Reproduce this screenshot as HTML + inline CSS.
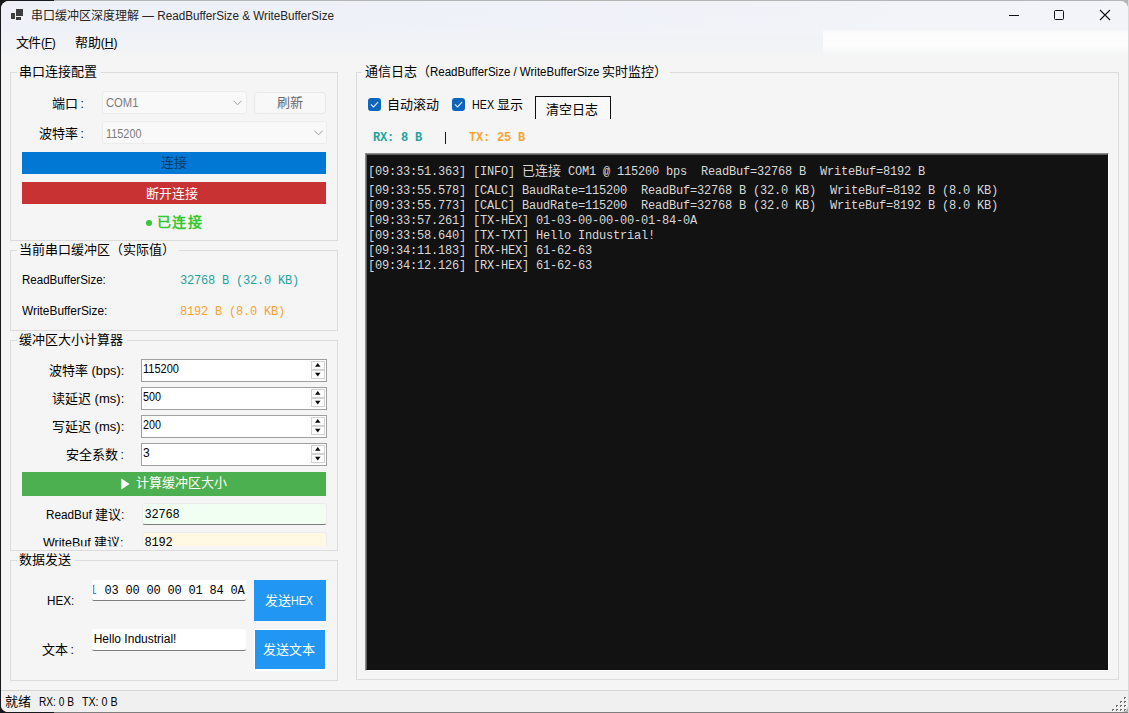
<!DOCTYPE html>
<html lang="zh-CN"><head><meta charset="utf-8"><title>Serial Buffer</title>
<style>
*{box-sizing:border-box;margin:0;padding:0}
html,body{width:1129px;height:713px;overflow:hidden}
body{font-family:"Liberation Sans",sans-serif;font-size:13px;color:#000;position:relative;background:#b4b5b7}
.t{position:absolute;white-space:pre}
.l{font-family:"Liberation Sans",sans-serif}
svg{position:absolute;overflow:visible}
</style></head><body>
<div style="position:absolute;left:0px;top:0px;width:1px;height:713px;background:#17181c"></div>
<div style="position:absolute;left:0px;top:0px;width:54px;height:1px;background:#17181c"></div>
<div style="position:absolute;left:0px;top:712px;width:1129px;height:1px;background:#7e7e7e"></div>
<div style="position:absolute;left:0px;top:712px;width:54px;height:1px;background:#17181c"></div>
<div style="position:absolute;left:0px;top:0px;width:9px;height:9px;background:#17181c"></div>
<div style="position:absolute;left:0px;top:704px;width:9px;height:9px;background:#17181c"></div>
<div style="position:absolute;left:1128px;top:0px;width:1px;height:713px;background:#d9d9d9"></div>
<div style="position:absolute;left:1px;top:1px;width:1127px;height:711px;background:#f5f5f5;border-radius:8px 8px 7px 7px;overflow:hidden"><div style="position:absolute;left:0;top:0;width:1127px;height:60px;background:linear-gradient(180deg,#eef0f8 0px,#eef1f8 26px,#f0f2f7 34px,#f2f3f6 46px,#f5f5f5 58px)"></div><div style="position:absolute;left:0;top:0;width:1127px;height:34px;background:linear-gradient(90deg,rgba(248,250,250,0) 25%,rgba(248,250,250,0.4) 100%)"></div><div style="position:absolute;left:822px;top:29px;width:305px;height:26px;background:linear-gradient(180deg,rgba(252,252,253,0.3) 0px,#fcfcfd 3px,#fdfdfd 16px,rgba(250,250,250,0.5) 22px,rgba(245,245,245,0) 26px)"></div></div>
<div style="position:absolute;left:16px;top:9px;width:7px;height:7px;background:#3d3d3d"></div>
<div style="position:absolute;left:11px;top:13px;width:4px;height:6px;background:#3d3d3d"></div>
<div style="position:absolute;left:16px;top:17px;width:5px;height:3px;background:#3d3d3d"></div>
<svg style="left:1000px;top:0" width="129" height="30" viewBox="0 0 129 30" fill="none" stroke="#111" stroke-width="1"><path d="M9 15.5H19"/><rect x="54.5" y="10.5" width="9" height="9" rx="1"/><path d="M100 10L110 20M110 10L100 20" stroke-width="1.1"/></svg>
<div style="position:absolute;left:10px;top:72px;width:328px;height:169px;border:1px solid #dcdcdc"></div>
<div style="position:absolute;left:16.5px;top:70px;width:84.0px;height:5px;background:#f5f5f5"></div>
<div style="position:absolute;left:10px;top:250px;width:328px;height:81px;border:1px solid #dcdcdc"></div>
<div style="position:absolute;left:16.5px;top:248px;width:162.0px;height:5px;background:#f5f5f5"></div>
<div style="position:absolute;left:10px;top:340px;width:328px;height:211px;border:1px solid #dcdcdc"></div>
<div style="position:absolute;left:16.5px;top:338px;width:110.0px;height:5px;background:#f5f5f5"></div>
<div style="position:absolute;left:10px;top:560px;width:328px;height:121px;border:1px solid #dcdcdc"></div>
<div style="position:absolute;left:16.5px;top:558px;width:58.0px;height:5px;background:#f5f5f5"></div>
<div style="position:absolute;left:356px;top:72px;width:763px;height:608px;border:1px solid #dcdcdc"></div>
<div style="position:absolute;left:362px;top:70px;width:308px;height:5px;background:#f5f5f5"></div>
<div style="position:absolute;left:102px;top:91px;width:145px;height:23px;background:#f9f9f9;border:1px solid #ececec;border-radius:3px"></div>
<svg style="left:233.4px;top:100.2px" width="9" height="6" viewBox="0 0 9 6" fill="none" stroke="#a0a0a0" stroke-width="1"><path d="M0.5 0.8L4.5 4.8L8.5 0.8"/></svg>
<div style="position:absolute;left:254px;top:92px;width:72px;height:22px;background:#f8f8f8;border:1px solid #e9e9e9;border-radius:4px"></div>
<div style="position:absolute;left:102px;top:121px;width:225px;height:23px;background:#f9f9f9;border:1px solid #ececec;border-radius:3px"></div>
<svg style="left:313.6px;top:130.2px" width="9" height="6" viewBox="0 0 9 6" fill="none" stroke="#a0a0a0" stroke-width="1"><path d="M0.5 0.8L4.5 4.8L8.5 0.8"/></svg>
<div style="position:absolute;left:22px;top:152px;width:304px;height:22px;background:#0078d4"></div>
<div style="position:absolute;left:22px;top:182px;width:304px;height:22px;background:#c83232"></div>
<div style="position:absolute;left:146px;top:219.7px;width:6.2px;height:6.6px;background:#35c935;border-radius:50%"></div>
<div style="position:absolute;left:141px;top:359px;width:186px;height:23px;background:#fff;border:1px solid #9f9f9f"></div>
<div style="position:absolute;left:311px;top:361px;width:13.5px;height:8.6px;background:#fefefe;border:1px solid #d2d2d2"></div>
<div style="position:absolute;left:311px;top:370.2px;width:13.5px;height:8.6px;background:#fefefe;border:1px solid #d2d2d2"></div>
<svg style="left:314.8px;top:363.2px" width="5.5" height="14" viewBox="0 0 5.5 14" fill="#0c0c0c"><path d="M0 3.8L2.75 0L5.5 3.8Z"/><path d="M0 9.7L5.5 9.7L2.75 13.4Z"/></svg>
<div style="position:absolute;left:141px;top:387px;width:186px;height:23px;background:#fff;border:1px solid #9f9f9f"></div>
<div style="position:absolute;left:311px;top:389px;width:13.5px;height:8.6px;background:#fefefe;border:1px solid #d2d2d2"></div>
<div style="position:absolute;left:311px;top:398.2px;width:13.5px;height:8.6px;background:#fefefe;border:1px solid #d2d2d2"></div>
<svg style="left:314.8px;top:391.2px" width="5.5" height="14" viewBox="0 0 5.5 14" fill="#0c0c0c"><path d="M0 3.8L2.75 0L5.5 3.8Z"/><path d="M0 9.7L5.5 9.7L2.75 13.4Z"/></svg>
<div style="position:absolute;left:141px;top:415px;width:186px;height:23px;background:#fff;border:1px solid #9f9f9f"></div>
<div style="position:absolute;left:311px;top:417px;width:13.5px;height:8.6px;background:#fefefe;border:1px solid #d2d2d2"></div>
<div style="position:absolute;left:311px;top:426.2px;width:13.5px;height:8.6px;background:#fefefe;border:1px solid #d2d2d2"></div>
<svg style="left:314.8px;top:419.2px" width="5.5" height="14" viewBox="0 0 5.5 14" fill="#0c0c0c"><path d="M0 3.8L2.75 0L5.5 3.8Z"/><path d="M0 9.7L5.5 9.7L2.75 13.4Z"/></svg>
<div style="position:absolute;left:141px;top:443px;width:186px;height:23px;background:#fff;border:1px solid #9f9f9f"></div>
<div style="position:absolute;left:311px;top:445px;width:13.5px;height:8.6px;background:#fefefe;border:1px solid #d2d2d2"></div>
<div style="position:absolute;left:311px;top:454.2px;width:13.5px;height:8.6px;background:#fefefe;border:1px solid #d2d2d2"></div>
<svg style="left:314.8px;top:447.2px" width="5.5" height="14" viewBox="0 0 5.5 14" fill="#0c0c0c"><path d="M0 3.8L2.75 0L5.5 3.8Z"/><path d="M0 9.7L5.5 9.7L2.75 13.4Z"/></svg>
<div style="position:absolute;left:22px;top:472px;width:304px;height:24px;background:#4caf50"></div>
<svg style="left:121px;top:478px" width="9" height="12" viewBox="0 0 9 12" fill="#fff"><path d="M0.3 0.6L8.6 6L0.3 11.4Z"/></svg>
<div style="position:absolute;left:142px;top:503px;width:185px;height:22px;background:#f1fff2;border:1px solid #ececec;border-bottom:1px solid #7d7d7d;border-radius:3px"></div>
<div style="position:absolute;left:11px;top:528px;width:326px;height:18px;overflow:hidden" id="clip"></div>
<div style="position:absolute;left:142px;top:531.5px;width:185px;height:14.5px;background:#fff8e3;border:1px solid #ececec;border-bottom:none;border-radius:3px 3px 0 0"></div>
<div style="position:absolute;left:92px;top:580px;width:154px;height:21px;background:#fff;border-bottom:1px solid #7d7d7d;border-radius:2px"></div>
<div style="position:absolute;left:93px;top:580px;width:152px;height:20px;overflow:hidden"><div id="hex" style="position:absolute;right:0.5px;top:4px;white-space:pre;font-family:'Liberation Mono',monospace;font-size:12px;line-height:14px;letter-spacing:-0.201px"><span style="color:#4577d4;position:relative;left:-1px">1</span> 03 00 00 00 01 84 0A</div></div>
<div style="position:absolute;left:254px;top:580px;width:72px;height:41px;background:#2196f3"></div>
<div style="position:absolute;left:92px;top:629px;width:154px;height:22px;background:#fff;border-bottom:1px solid #7d7d7d;border-radius:2px"></div>
<div style="position:absolute;left:253.5px;top:628.5px;width:73px;height:42px;background:#fbffff;border-radius:1px"></div>
<div style="position:absolute;left:255px;top:630px;width:70px;height:39px;background:#2196f3"></div>
<div style="position:absolute;left:1px;top:690px;width:1127px;height:1px;background:#d4d4d4"></div>
<div style="position:absolute;left:1px;top:691px;width:1127px;height:21px;background:#f0f0f0;border-radius:0 0 7px 7px"></div>
<svg style="left:0;top:0" width="1129" height="713" viewBox="0 0 1129 713"><rect x="1124" y="697" width="2" height="2" fill="#707070"/><rect x="1125" y="698" width="1" height="1" fill="#fff"/><rect x="1120" y="701" width="2" height="2" fill="#707070"/><rect x="1121" y="702" width="1" height="1" fill="#fff"/><rect x="1124" y="701" width="2" height="2" fill="#707070"/><rect x="1125" y="702" width="1" height="1" fill="#fff"/><rect x="1116" y="705" width="2" height="2" fill="#707070"/><rect x="1117" y="706" width="1" height="1" fill="#fff"/><rect x="1120" y="705" width="2" height="2" fill="#707070"/><rect x="1121" y="706" width="1" height="1" fill="#fff"/><rect x="1124" y="705" width="2" height="2" fill="#707070"/><rect x="1125" y="706" width="1" height="1" fill="#fff"/><rect x="1112" y="709" width="2" height="2" fill="#707070"/><rect x="1113" y="710" width="1" height="1" fill="#fff"/><rect x="1116" y="709" width="2" height="2" fill="#707070"/><rect x="1117" y="710" width="1" height="1" fill="#fff"/><rect x="1120" y="709" width="2" height="2" fill="#707070"/><rect x="1121" y="710" width="1" height="1" fill="#fff"/><rect x="1124" y="709" width="2" height="2" fill="#707070"/><rect x="1125" y="710" width="1" height="1" fill="#fff"/></svg>
<svg style="left:368px;top:98px" width="13" height="13" viewBox="0 0 13 13"><rect x="0" y="0" width="13" height="13" rx="3" fill="#0c64bd"/><path d="M3.2 6.7L5.5 9L9.8 4.4" fill="none" stroke="#dbe9f8" stroke-width="1.1" stroke-linecap="round" stroke-linejoin="round"/></svg>
<svg style="left:452px;top:98px" width="13" height="13" viewBox="0 0 13 13"><rect x="0" y="0" width="13" height="13" rx="3" fill="#0c64bd"/><path d="M3.2 6.7L5.5 9L9.8 4.4" fill="none" stroke="#dbe9f8" stroke-width="1.1" stroke-linecap="round" stroke-linejoin="round"/></svg>
<div style="position:absolute;left:535px;top:96px;width:76px;height:23px;background:#f8f8f8;border:1px solid #0e0e0e;border-bottom:none"></div>
<div style="position:absolute;left:444.6px;top:132px;width:1.4px;height:11.6px;background:#23102a"></div>
<div style="position:absolute;left:365px;top:153px;width:744px;height:518px;background:#121212;border:2px solid;border-color:#8b8b8b #fff #fff #8b8b8b"></div>
<div style="position:absolute;left:366px;top:154px;width:742px;height:516px;border:1px solid;border-color:#5f5f5f #121212 #121212 #5f5f5f"></div>
<div id="t0" class="t" style="left:30.5px;top:8.00px;font-family:'Liberation Sans',sans-serif;font-size:12px;line-height:16px;color:#262626;font-weight:400;">串口缓冲区深度理解<span class="l" id="t0_0" style="font-size:12px;display:inline-block;transform:scaleX(0.9745);transform-origin:0 50%;margin-right:-5.09px;"> — ReadBufferSize &amp; WriteBufferSize</span></div>
<div id="t1" class="t" style="left:15.5px;top:34.50px;font-family:'Liberation Sans',sans-serif;font-size:13px;line-height:16px;color:#000;font-weight:400;letter-spacing:-0.269px;">文件<span class="l" style="font-size:12px">(<u>F</u>)</span></div>
<div id="t2" class="t" style="left:74.5px;top:34.50px;font-family:'Liberation Sans',sans-serif;font-size:13px;line-height:16px;color:#000;font-weight:400;letter-spacing:0.066px;">帮助<span class="l" style="font-size:12px">(<u>H</u>)</span></div>
<div id="t3" class="t" style="left:19.0px;top:63.60px;font-family:'Liberation Sans',sans-serif;font-size:13px;line-height:16px;color:#000;font-weight:400;">串口连接配置</div>
<div id="t4" class="t" style="left:19.0px;top:241.60px;font-family:'Liberation Sans',sans-serif;font-size:13px;line-height:16px;color:#000;font-weight:400;">当前串口缓冲区（实际值）</div>
<div id="t5" class="t" style="left:19.0px;top:331.60px;font-family:'Liberation Sans',sans-serif;font-size:13px;line-height:16px;color:#000;font-weight:400;">缓冲区大小计算器</div>
<div id="t6" class="t" style="left:19.0px;top:551.60px;font-family:'Liberation Sans',sans-serif;font-size:13px;line-height:16px;color:#000;font-weight:400;">数据发送</div>
<div id="t7" class="t" style="left:364.5px;top:63.60px;font-family:'Liberation Sans',sans-serif;font-size:13px;line-height:16px;color:#000;font-weight:400;">通信日志（<span class="l" id="t7_0" style="font-size:12px;display:inline-block;transform:scaleX(0.9578);transform-origin:0 50%;margin-right:-7.59px;">ReadBufferSize / WriteBufferSize </span>实时监控）</div>
<div id="t8" class="t" style="left:51.5px;top:96.00px;font-family:'Liberation Sans',sans-serif;font-size:13px;line-height:16px;color:#000;font-weight:400;">端口<span class="l" id="t8_0" style="font-size:12px;margin-left:2.96px;">:</span></div>
<div id="t9" class="t" style="left:106px;top:95.00px;font-family:'Liberation Sans',sans-serif;font-size:12px;line-height:16px;color:#7d7d7d;font-weight:400;"><span class="l" id="t9_0" style="font-size:12px;display:inline-block;transform:scaleX(0.9374);transform-origin:0 50%;margin-right:-2.17px;">COM1</span></div>
<div id="t10" class="t" style="left:276.5px;top:94.50px;font-family:'Liberation Sans',sans-serif;font-size:13px;line-height:16px;color:#6a6a6a;font-weight:400;">刷新</div>
<div id="t11" class="t" style="left:38.5px;top:126.00px;font-family:'Liberation Sans',sans-serif;font-size:13px;line-height:16px;color:#000;font-weight:400;">波特率<span class="l" id="t11_0" style="font-size:12px;margin-left:2.96px;">:</span></div>
<div id="t12" class="t" style="left:106px;top:125.50px;font-family:'Liberation Sans',sans-serif;font-size:12px;line-height:16px;color:#7d7d7d;font-weight:400;"><span class="l" id="t12_0" style="font-size:12px;display:inline-block;transform:scaleX(0.9066);transform-origin:0 50%;margin-right:-3.66px;">115200</span></div>
<div id="t13" class="t" style="left:160.5px;top:154.50px;font-family:'Liberation Sans',sans-serif;font-size:13px;line-height:16px;color:#0b3a63;font-weight:400;">连接</div>
<div id="t14" class="t" style="left:146.0px;top:185.50px;font-family:'Liberation Sans',sans-serif;font-size:13px;line-height:16px;color:#fff;font-weight:400;">断开连接</div>
<div id="t15" class="t" style="left:157.1px;top:214.00px;font-family:'Liberation Sans',sans-serif;font-size:14px;line-height:16px;color:#32c832;font-weight:700;letter-spacing:1.300px;">已连接</div>
<div id="t16" class="t" style="left:22px;top:272.00px;font-family:'Liberation Sans',sans-serif;font-size:13px;line-height:16px;color:#000;font-weight:400;"><span class="l" id="t16_0" style="font-size:12px;display:inline-block;transform:scaleX(0.9613);transform-origin:0 50%;margin-right:-3.37px;">ReadBufferSize:</span></div>
<div id="t17" class="t" style="left:22px;top:302.50px;font-family:'Liberation Sans',sans-serif;font-size:13px;line-height:16px;color:#000;font-weight:400;"><span class="l" id="t17_0" style="font-size:12px;display:inline-block;transform:scaleX(0.9888);transform-origin:0 50%;margin-right:-0.97px;">WriteBufferSize:</span></div>
<div id="t18" class="t" style="left:180px;top:273.00px;font-family:'Liberation Mono',monospace;font-size:12px;line-height:16px;color:#1ea39c;font-weight:400;letter-spacing:-0.201px;">32768 B (32.0 KB)</div>
<div id="t19" class="t" style="left:180px;top:304.00px;font-family:'Liberation Mono',monospace;font-size:12px;line-height:16px;color:#f5a433;font-weight:400;letter-spacing:-0.202px;">8192 B (8.0 KB)</div>
<div id="t20" class="t" style="left:48.5px;top:362.50px;font-family:'Liberation Sans',sans-serif;font-size:13px;line-height:16px;color:#000;font-weight:400;">波特率<span class="l" id="t20_0" style="font-size:12px;display:inline-block;transform:scaleX(1.0672);transform-origin:0 50%;margin-right:2.28px;"> (bps):</span></div>
<div id="t21" class="t" style="left:143px;top:360.70px;font-family:'Liberation Sans',sans-serif;font-size:12px;line-height:16px;color:#000;font-weight:400;"><span class="l" id="t21_0" style="font-size:12px;display:inline-block;transform:scaleX(0.9194);transform-origin:0 50%;margin-right:-3.16px;">115200</span></div>
<div id="t22" class="t" style="left:51.5px;top:390.50px;font-family:'Liberation Sans',sans-serif;font-size:13px;line-height:16px;color:#000;font-weight:400;">读延迟<span class="l" id="t22_0" style="font-size:12px;display:inline-block;transform:scaleX(1.0862);transform-origin:0 50%;margin-right:2.64px;"> (ms):</span></div>
<div id="t23" class="t" style="left:143px;top:388.70px;font-family:'Liberation Sans',sans-serif;font-size:12px;line-height:16px;color:#000;font-weight:400;"><span class="l" id="t23_0" style="font-size:12px;display:inline-block;transform:scaleX(0.8986);transform-origin:0 50%;margin-right:-2.03px;">500</span></div>
<div id="t24" class="t" style="left:51.5px;top:418.50px;font-family:'Liberation Sans',sans-serif;font-size:13px;line-height:16px;color:#000;font-weight:400;">写延迟<span class="l" id="t24_0" style="font-size:12px;display:inline-block;transform:scaleX(1.0862);transform-origin:0 50%;margin-right:2.64px;"> (ms):</span></div>
<div id="t25" class="t" style="left:143px;top:416.70px;font-family:'Liberation Sans',sans-serif;font-size:12px;line-height:16px;color:#000;font-weight:400;"><span class="l" id="t25_0" style="font-size:12px;display:inline-block;transform:scaleX(0.8986);transform-origin:0 50%;margin-right:-2.03px;">200</span></div>
<div id="t26" class="t" style="left:65.5px;top:446.50px;font-family:'Liberation Sans',sans-serif;font-size:13px;line-height:16px;color:#000;font-weight:400;">安全系数<span class="l" id="t26_0" style="font-size:12px;margin-left:2.96px;">:</span></div>
<div id="t27" class="t" style="left:143px;top:444.70px;font-family:'Liberation Sans',sans-serif;font-size:12px;line-height:16px;color:#000;font-weight:400;"><span class="l" id="t27_0" style="font-size:12px;">3</span></div>
<div id="t28" class="t" style="left:135.5px;top:475.00px;font-family:'Liberation Sans',sans-serif;font-size:13px;line-height:16px;color:#fff;font-weight:400;">计算缓冲区大小</div>
<div id="t29" class="t" style="left:45.5px;top:507.00px;font-family:'Liberation Sans',sans-serif;font-size:13px;line-height:16px;color:#000;font-weight:400;"><span class="l" id="t29_0" style="font-size:12px;display:inline-block;transform:scaleX(0.9796);transform-origin:0 50%;margin-right:-1.02px;">ReadBuf </span>建议<span class="l" id="t29_1" style="font-size:12px;display:inline-block;transform:scaleX(0.9796);transform-origin:0 50%;margin-right:-0.07px;">:</span></div>
<div id="t30" class="t" style="left:144.5px;top:507.00px;font-family:'Liberation Mono',monospace;font-size:12px;line-height:16px;color:#000;font-weight:400;letter-spacing:-0.203px;">32768</div>
<div id="t31" class="t" style="left:43px;top:534.50px;font-family:'Liberation Sans',sans-serif;font-size:13px;line-height:16px;color:#000;font-weight:400;clip-path:inset(0 0 4.2px 0);"><span class="l" id="t31_0" style="font-size:12px;display:inline-block;transform:scaleX(1.0444);transform-origin:0 50%;margin-right:2.18px;">WriteBuf </span>建议<span class="l" id="t31_1" style="font-size:12px;display:inline-block;transform:scaleX(1.0444);transform-origin:0 50%;margin-right:0.15px;">:</span></div>
<div id="t32" class="t" style="left:144.5px;top:535.00px;font-family:'Liberation Mono',monospace;font-size:12px;line-height:16px;color:#000;font-weight:400;letter-spacing:-0.203px;clip-path:inset(0 0 3.5px 0);">8192</div>
<div id="t33" class="t" style="left:46.5px;top:592.70px;font-family:'Liberation Sans',sans-serif;font-size:13px;line-height:16px;color:#000;font-weight:400;"><span class="l" id="t33_0" style="font-size:12px;display:inline-block;transform:scaleX(0.9745);transform-origin:0 50%;margin-right:-0.72px;">HEX:</span></div>
<div id="t34" class="t" style="left:265.0px;top:593.00px;font-family:'Liberation Sans',sans-serif;font-size:13px;line-height:16px;color:#fff;font-weight:400;">发送<span class="l" id="t34_0" style="font-size:12px;display:inline-block;transform:scaleX(0.8911);transform-origin:0 50%;margin-right:-2.69px;">HEX</span></div>
<div id="t35" class="t" style="left:41.5px;top:642.00px;font-family:'Liberation Sans',sans-serif;font-size:13px;line-height:16px;color:#000;font-weight:400;">文本<span class="l" id="t35_0" style="font-size:12px;margin-left:2.96px;">:</span></div>
<div id="t36" class="t" style="left:93.7px;top:631.00px;font-family:'Liberation Sans',sans-serif;font-size:12px;line-height:16px;color:#000;font-weight:400;"><span class="l" id="t36_0" style="font-size:12px;">Hello Industrial!</span></div>
<div id="t37" class="t" style="left:263.0px;top:642.00px;font-family:'Liberation Sans',sans-serif;font-size:13px;line-height:16px;color:#fff;font-weight:400;">发送文本</div>
<div id="t38" class="t" style="left:4.7px;top:693.60px;font-family:'Liberation Sans',sans-serif;font-size:13px;line-height:16px;color:#000;font-weight:400;">就绪</div>
<div id="t39" class="t" style="left:39px;top:693.60px;font-family:'Liberation Sans',sans-serif;font-size:12px;line-height:16px;color:#000;font-weight:400;"><span class="l" id="t39_0" style="font-size:12px;display:inline-block;transform:scaleX(0.8462);transform-origin:0 50%;margin-right:-6.36px;">RX: 0 B</span></div>
<div id="t40" class="t" style="left:82px;top:693.60px;font-family:'Liberation Sans',sans-serif;font-size:12px;line-height:16px;color:#000;font-weight:400;"><span class="l" id="t40_0" style="font-size:12px;display:inline-block;transform:scaleX(0.8872);transform-origin:0 50%;margin-right:-4.52px;">TX: 0 B</span></div>
<div id="t41" class="t" style="left:387.0px;top:97.00px;font-family:'Liberation Sans',sans-serif;font-size:13px;line-height:16px;color:#000;font-weight:400;">自动滚动</div>
<div id="t42" class="t" style="left:471.5px;top:97.00px;font-family:'Liberation Sans',sans-serif;font-size:13px;line-height:16px;color:#000;font-weight:400;"><span class="l" id="t42_0" style="font-size:12px;display:inline-block;transform:scaleX(0.8924);transform-origin:0 50%;margin-right:-3.02px;">HEX </span>显示</div>
<div id="t43" class="t" style="left:545.5px;top:102.00px;font-family:'Liberation Sans',sans-serif;font-size:13px;line-height:16px;color:#000;font-weight:400;">清空日志</div>
<div id="t44" class="t" style="left:373px;top:130.00px;font-family:'Liberation Mono',monospace;font-size:12px;line-height:16px;color:#1ea39c;font-weight:700;letter-spacing:-0.203px;">RX: 8 B</div>
<div id="t45" class="t" style="left:469px;top:130.00px;font-family:'Liberation Mono',monospace;font-size:12px;line-height:16px;color:#f5a433;font-weight:700;letter-spacing:-0.201px;">TX: 25 B</div>
<div id="t46" class="t" style="left:368px;top:165.00px;font-family:'Liberation Mono',monospace;font-size:12px;line-height:15px;color:#d8d8d8;font-weight:400;letter-spacing:-0.202px;">[09:33:51.363] [INFO] </div>
<div id="t47" class="t" style="left:521.5px;top:163.00px;font-family:'Liberation Sans',sans-serif;font-size:13px;line-height:15px;color:#d8d8d8;font-weight:400;">已连接</div>
<div id="t48" class="t" style="left:568px;top:165.00px;font-family:'Liberation Mono',monospace;font-size:12px;line-height:15px;color:#d8d8d8;font-weight:400;letter-spacing:-0.201px;">COM1 @ 115200 bps  ReadBuf=32768 B  WriteBuf=8192 B</div>
<div id="t49" class="t" style="left:368px;top:184.00px;font-family:'Liberation Mono',monospace;font-size:12px;line-height:15px;color:#d8d8d8;font-weight:400;letter-spacing:-0.201px;">[09:33:55.578] [CALC] BaudRate=115200  ReadBuf=32768 B (32.0 KB)  WriteBuf=8192 B (8.0 KB)</div>
<div id="t50" class="t" style="left:368px;top:199.00px;font-family:'Liberation Mono',monospace;font-size:12px;line-height:15px;color:#d8d8d8;font-weight:400;letter-spacing:-0.201px;">[09:33:55.773] [CALC] BaudRate=115200  ReadBuf=32768 B (32.0 KB)  WriteBuf=8192 B (8.0 KB)</div>
<div id="t51" class="t" style="left:368px;top:214.00px;font-family:'Liberation Mono',monospace;font-size:12px;line-height:15px;color:#d8d8d8;font-weight:400;letter-spacing:-0.201px;">[09:33:57.261] [TX-HEX] 01-03-00-00-00-01-84-0A</div>
<div id="t52" class="t" style="left:368px;top:229.00px;font-family:'Liberation Mono',monospace;font-size:12px;line-height:15px;color:#d8d8d8;font-weight:400;letter-spacing:-0.201px;">[09:33:58.640] [TX-TXT] Hello Industrial!</div>
<div id="t53" class="t" style="left:368px;top:244.00px;font-family:'Liberation Mono',monospace;font-size:12px;line-height:15px;color:#d8d8d8;font-weight:400;letter-spacing:-0.201px;">[09:34:11.183] [RX-HEX] 61-62-63</div>
<div id="t54" class="t" style="left:368px;top:259.00px;font-family:'Liberation Mono',monospace;font-size:12px;line-height:15px;color:#d8d8d8;font-weight:400;letter-spacing:-0.201px;">[09:34:12.126] [RX-HEX] 61-62-63</div>

</body></html>
